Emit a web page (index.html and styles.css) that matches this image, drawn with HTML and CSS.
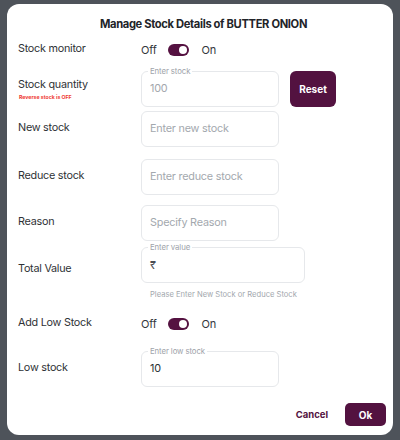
FILE: index.html
```html
<!DOCTYPE html>
<html>
<head>
<meta charset="utf-8">
<link rel="stylesheet" href="styles.css">
</head>
<body>
<div class="modal">
  <h1 class="title">Manage Stock Details of BUTTER ONION</h1>

  <div class="row row-toggle row-monitor">
    <div class="label">Stock monitor</div>
    <div class="switch-group">
      <span class="sw-text">Off</span>
      <span class="switch"><span class="knob"></span></span>
      <span class="sw-text">On</span>
    </div>
  </div>

  <div class="row row-qty">
    <div class="label label-stack">
      <span>Stock quantity</span>
      <span class="warn">Reverse stock is OFF</span>
    </div>
    <div class="field field-std">
      <span class="notch">Enter stock</span>
      <span class="value muted">100</span>
    </div>
    <button class="btn btn-reset">Reset</button>
  </div>

  <div class="row row-new">
    <div class="label">New stock</div>
    <div class="field field-std"><span class="value placeholder">Enter new stock</span></div>
  </div>

  <div class="row row-reduce">
    <div class="label">Reduce stock</div>
    <div class="field field-std"><span class="value placeholder">Enter reduce stock</span></div>
  </div>

  <div class="row row-reason">
    <div class="label">Reason</div>
    <div class="field field-std"><span class="value placeholder">Specify Reason</span></div>
  </div>

  <div class="row row-total">
    <div class="label label-total">Total Value</div>
    <div class="field-wrap">
      <div class="field field-wide">
        <span class="notch">Enter value</span>
        <span class="value rupee">₹</span>
      </div>
      <div class="helper">Please Enter New Stock or Reduce Stock</div>
    </div>
  </div>

  <div class="row row-toggle row-low-toggle">
    <div class="label">Add Low Stock</div>
    <div class="switch-group">
      <span class="sw-text">Off</span>
      <span class="switch"><span class="knob"></span></span>
      <span class="sw-text">On</span>
    </div>
  </div>

  <div class="row row-low">
    <div class="label">Low stock</div>
    <div class="field field-std">
      <span class="notch">Enter low stock</span>
      <span class="value dark">10</span>
    </div>
  </div>

  <div class="footer">
    <button class="btn-text">Cancel</button>
    <button class="btn btn-ok">Ok</button>
  </div>
</div>
</body>
</html>
```

FILE: styles.css
```css
* { box-sizing: border-box; }
html, body {
  margin: 0;
  padding: 0;
  width: 400px;
  height: 440px;
  overflow: hidden;
}
body {
  background: #4e535a;
  font-family: Inter, "Liberation Sans", sans-serif;
  color: #2f3237;
  padding: 4px 7px 0 7px;
}
.modal {
  width: 386px;
  height: 431px;
  background: #ffffff;
  border-radius: 12px;
  padding: 10px 7px 0 11px;
  display: flex;
  flex-direction: column;
}
.title {
  margin: 0;
  font-size: 11.2px;
  letter-spacing: -0.35px;
  font-weight: 700;
  line-height: 20px;
  height: 20px;
  text-align: center;
  color: #222428;
  padding-left: 3px;
}
.row {
  display: flex;
  align-items: center;
}
.label {
  width: 123px;
  flex: none;
  font-size: 10.8px;
  letter-spacing: -0.25px;
  color: #2f3236;
  padding-bottom: 3px;
}
.label-stack {
  display: flex;
  flex-direction: column;
  padding-bottom: 0;
  padding-top: 0;
}
.warn {
  font-size: 5.2px;
  letter-spacing: 0;
  font-weight: 700;
  color: #ef3b35;
  margin-top: 3px;
  margin-left: 1px;
}
.row-toggle { height: 24px; }
.row-monitor { margin-top: 4px; }
.row-qty { margin-top: 9px; }
.row-new { margin-top: 4px; }
.row-reduce { margin-top: 12px; }
.row-reason { margin-top: 10px; }
.row-total { margin-top: 6px; align-items: flex-start; }
.label-total { padding-top: 15px; padding-bottom: 0; }
.row-low-toggle { margin-top: 12px; }
.row-low { margin-top: 15px; }

.switch-group {
  display: flex;
  align-items: center;
  font-size: 11px;
  letter-spacing: -0.2px;
  color: #34373c;
}
.sw-text { line-height: 14px; }
.switch {
  width: 21px;
  height: 12px;
  border-radius: 6px;
  background: #551241;
  margin: 0 13px 0 11px;
  position: relative;
  display: block;
}
.knob {
  position: absolute;
  right: 2px;
  top: 2px;
  width: 8px;
  height: 8px;
  border-radius: 50%;
  background: #fff;
}

.field {
  position: relative;
  height: 36px;
  border: 1px solid #e6e8eb;
  border-radius: 6px;
  display: flex;
  align-items: center;
  padding-left: 8px;
}
.field-std { width: 138px; }
.field-wide { width: 164px; }
.notch {
  position: absolute;
  left: 6px;
  top: -6px;
  font-size: 7.8px;
  letter-spacing: -0.1px;
  line-height: 10px;
  color: #9ea3aa;
  background: #fff;
  padding: 0 2px;
}
.value {
  font-size: 10.8px;
  letter-spacing: -0.2px;
  line-height: 14px;
}
.muted { color: #a3a7ad; }
.placeholder { color: #a3a8ae; }
.dark { color: #2c2f33; }
.rupee { color: #4a4d52; font-size: 11px; margin-top: -1px; }
.helper {
  font-size: 7.6px;
  color: #a3a8ae;
  margin-top: 7px;
  padding-left: 9px;
  line-height: 10px;
}

.btn {
  border: none;
  background: #531240;
  color: #fff;
  font-family: inherit;
  font-weight: 700;
  border-radius: 6px;
  padding: 0;
  cursor: pointer;
}
.btn-reset {
  width: 46px;
  height: 36px;
  margin-left: 11px;
  font-size: 10px;
}
.footer {
  margin-top: 16px;
  display: flex;
  justify-content: flex-end;
  align-items: center;
}
.btn-text {
  border: none;
  background: none;
  color: #531240;
  font-family: inherit;
  font-weight: 700;
  font-size: 9.5px;
  padding: 0;
  margin-right: 17px;
}
.btn-ok {
  width: 41px;
  height: 23px;
  font-size: 10px;
  border-radius: 5px;
}
```
